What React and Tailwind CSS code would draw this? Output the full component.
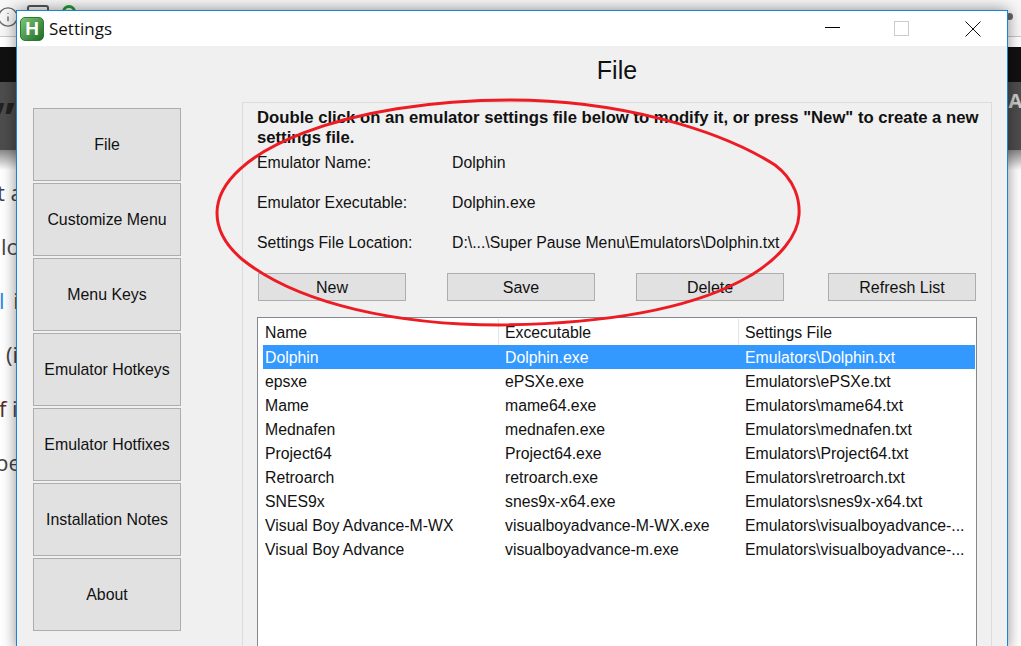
import React from "react";
import { Info } from "lucide-react";

const navItems = [
  "File",
  "Customize Menu",
  "Menu Keys",
  "Emulator Hotkeys",
  "Emulator Hotfixes",
  "Installation Notes",
  "About",
];

const emulators = [
  ["Dolphin", "Dolphin.exe", "Emulators\\Dolphin.txt"],
  ["epsxe", "ePSXe.exe", "Emulators\\ePSXe.txt"],
  ["Mame", "mame64.exe", "Emulators\\mame64.txt"],
  ["Mednafen", "mednafen.exe", "Emulators\\mednafen.txt"],
  ["Project64", "Project64.exe", "Emulators\\Project64.txt"],
  ["Retroarch", "retroarch.exe", "Emulators\\retroarch.txt"],
  ["SNES9x", "snes9x-x64.exe", "Emulators\\snes9x-x64.txt"],
  ["Visual Boy Advance-M-WX", "visualboyadvance-M-WX.exe", "Emulators\\visualboyadvance-..."],
  ["Visual Boy Advance", "visualboyadvance-m.exe", "Emulators\\visualboyadvance-..."],
];

const details = [
  ["Emulator Name:", "Dolphin"],
  ["Emulator Executable:", "Dolphin.exe"],
  ["Settings File Location:", "D:\\...\\Super Pause Menu\\Emulators\\Dolphin.txt"],
];

// what shows of the web page behind the settings window
function BrowserBehind() {
  return (
    <div className="absolute inset-0 flex flex-col bg-white">
      <div className="h-[37px] shrink-0 border-b border-[#c8c8c8] bg-[#f7f7f7] flex items-start">
        <Info size={22} strokeWidth={1.5} className="text-[#666] mt-[6px] ml-[-3px]" />
        <div className="w-[22px] h-[14px] mt-[5px] ml-[8px] rounded-[3px] border-2 border-[#555]" />
        <div className="w-[14px] h-[14px] mt-[5px] ml-[13px] rounded-full border-[3px] border-[#1f9d2f]" />
        <div className="ml-auto mr-[8px] mt-[13px] w-[7px] h-[7px] rounded-full bg-[#666]" />
      </div>
      <div className="h-[10px] shrink-0 bg-white" />
      <div className="h-[35px] shrink-0 bg-[#111111]" />
      <div className="h-[68px] shrink-0 bg-[#4d4d4d] flex justify-between font-['Open_Sans',sans-serif] font-bold">
        <span className="text-[44px] leading-[72px] text-[#222] ml-[-5px]">”</span>
        <span className="text-[20px] leading-[38px] text-[#ccc] mr-[-8px]">AI</span>
      </div>
      <div className="h-[20px] shrink-0 bg-linear-to-b from-[#8a8a8a] to-white" />
      <div className="-mt-[5px] font-['Open_Sans',sans-serif] text-[22px] leading-[54px] text-[#444] whitespace-nowrap">
        <div className="ml-[-3px]">t a</div>
        <div className="ml-[1px]">lo</div>
        <div className="ml-[-1px]"><span className="text-[#1e88e5]">l</span> <span className="ml-[3px]">i</span></div>
        <div className="ml-[6px]">(i</div>
        <div className="ml-[-1px]"><span className="text-[#5a2a2a]">f</span> i</div>
        <div className="ml-[-5px]">pe</div>
      </div>
    </div>
  );
}

function TitleBar() {
  return (
    <div className="h-[35px] shrink-0 bg-white flex items-center">
      <div className="w-6 h-6 ml-[3px] rounded-[5px] border border-[#2a7a33] bg-linear-to-br from-[#7cc873] to-[#1d6b28] flex items-center justify-center text-white font-bold text-[19px] leading-none font-['Liberation_Sans',sans-serif]">
        H
      </div>
      <span className="ml-[5px] pt-px text-[17px] text-[#111] font-['Open_Sans',sans-serif]">Settings</span>
      <div className="ml-auto flex items-center">
        <div className="w-[15px] h-px -mt-[2px] bg-black" />
        <div className="w-[15px] h-[15px] ml-[54px] border border-[#cccccc]" />
        <svg width="16" height="16" viewBox="0 0 16 16" className="ml-[56px] mr-[26px]">
          <path d="M0.5 0.5 L15.5 15.5 M15.5 0.5 L0.5 15.5" stroke="#111" strokeWidth="1" fill="none" />
        </svg>
      </div>
    </div>
  );
}

function EmulatorList() {
  return (
    <div className="mt-4 w-[720px] h-[400px] border border-[#828790] bg-white text-[15.8px]">
      <div className="h-[27px] grid grid-cols-[241px_240px_1fr] text-[#111]">
        <div className="pl-[7px] pt-1 border-r border-[#e5e5e5] mt-px">Name</div>
        <div className="pl-[6px] pt-1 border-r border-[#e5e5e5] mt-px">Excecutable</div>
        <div className="pl-[6px] pt-1 mt-px">Settings File</div>
      </div>
      {emulators.map((emu, index) => (
        <div
          key={emu[0]}
          className={`ml-[5px] mr-px h-6 pt-px grid grid-cols-[236px_240px_1fr] items-center ${
            index === 0 ? "bg-[#3399ff] text-white" : "text-[#111]"
          }`}
        >
          <div className="pl-[2px]">{emu[0]}</div>
          <div className="pl-[6px]">{emu[1]}</div>
          <div className="pl-[6px]">{emu[2]}</div>
        </div>
      ))}
    </div>
  );
}

export default function App() {
  return (
    <div className="relative w-[1021px] h-[646px] overflow-hidden font-['Liberation_Sans',Arial,sans-serif] text-[16px] leading-5">
      <BrowserBehind />

      {/* settings window */}
      <div className="absolute left-[16px] top-[10px] w-[992px] h-[640px] border border-[#1883d7] bg-[#f0f0f0] flex flex-col shadow-[0_0_14px_rgba(0,0,0,0.45)]">
        <TitleBar />
        <div className="flex">
          <div className="ml-4 mt-[62px] w-[148px] flex flex-col gap-[2px] shrink-0 text-[15.9px]">
            {navItems.map((item) => (
              <button
                key={item}
                className="h-[73px] border border-[#adadad] bg-[#e1e1e1] text-[#111]"
              >
                {item}
              </button>
            ))}
          </div>
          <div className="ml-[61px] w-[750px]">
            <div className="h-[56px] text-center text-[25px] leading-[48px] text-[#111]">File</div>
            <div className="border border-[#dcdcdc] h-[600px] pl-[14px] pt-[5px]">
              <p className="font-bold text-[16.7px] text-[#111] w-[726px]">
                Double click on an emulator settings file below to modify it, or press "New" to create a new settings file.
              </p>
              <div className="mt-[5px] flex flex-col gap-5 text-[15.8px]">
                {details.map(([label, value]) => (
                  <div key={label} className="flex text-[#111]">
                    <span className="w-[195px]">{label}</span>
                    <span>{value}</span>
                  </div>
                ))}
              </div>
              <div className="mt-[20px] ml-px flex">
                {["New", "Save", "Delete"].map((label) => (
                  <button
                    key={label}
                    className="w-[148px] h-7 pt-px mr-[41px] border border-[#adadad] bg-[#e1e1e1] text-[#111]"
                  >
                    {label}
                  </button>
                ))}
                <button className="w-[148px] h-7 pt-px ml-[3px] border border-[#adadad] bg-[#e1e1e1] text-[#111]">
                  Refresh List
                </button>
              </div>
              <EmulatorList />
            </div>
          </div>
        </div>
      </div>

      {/* red hand-drawn circle on top of the screenshot */}
      <svg className="absolute left-0 top-0 pointer-events-none" width="1021" height="646" fill="none">
        <path
          d="M217 213 C217 150 350 100 510 100 C620 100 720 130 775 165 C795 180 800 200 799 215 C797 250 740 322 500 325 C400 325 300 305 243 260 C225 245 217 230 217 213 Z"
          stroke="#ed1c24"
          strokeWidth="3"
        />
      </svg>
    </div>
  );
}
